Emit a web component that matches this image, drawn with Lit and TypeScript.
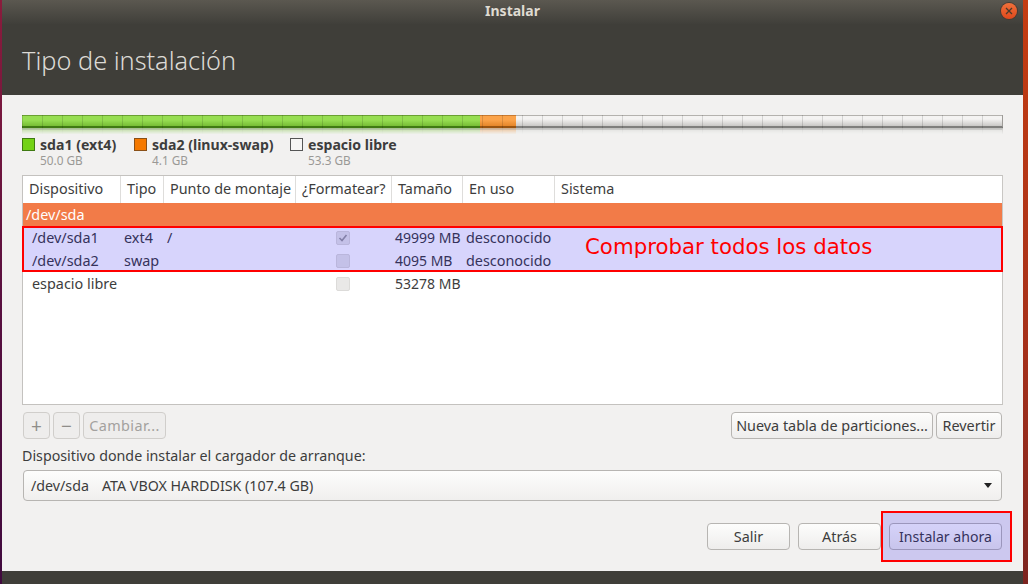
import { LitElement, css, html } from 'lit';
import { customElement } from 'lit/decorators.js';

const headers = ['Dispositivo', 'Tipo', 'Punto de montaje', '¿Formatear?', 'Tamaño', 'En uso', 'Sistema'];

const rows = [
   { dev: '/dev/sda1', type: 'ext4', mount: '/', checked: true, size: '49999 MB', used: 'desconocido' },
   { dev: '/dev/sda2', type: 'swap', mount: '', checked: false, size: '4095 MB', used: 'desconocido' },
   { dev: 'espacio libre', type: '', mount: '', checked: false, size: '53278 MB', used: '' }
];

const legend = [
   { name: 'sda1 (ext4)', size: '50.0 GB', cls: 'green' },
   { name: 'sda2 (linux-swap)', size: '4.1 GB', cls: 'orange' },
   { name: 'espacio libre', size: '53.3 GB', cls: 'free' }
];

@customElement( 'app-root' )
export class AppRoot extends LitElement {
   render() {
      return html`
      <div class="strip left"></div>
      <div class="window">
        <div class="titlebar">
          <span class="wintitle">Instalar</span>
          <span class="close">
            <svg width="8" height="8" viewBox="0 0 8 8"><path d="M1 1L7 7M7 1L1 7" stroke="#4a3a2a" stroke-width="1.3"/></svg>
          </span>
        </div>
        <div class="header"><h1>Tipo de instalación</h1></div>
        <div class="content">
          <div class="bar">
            <div class="seg green"></div>
            <div class="seg orange"></div>
            <div class="seg free"></div>
          </div>
          <div class="legend">
            ${ legend.map( l => html`
              <div class="legend-item ${ l.cls }">
                <span class="swatch"></span>
                <div>
                  <div class="lname">${ l.name }</div>
                  <div class="lsize">${ l.size }</div>
                </div>
              </div>
            ` ) }
          </div>
          <div class="table">
            <div class="thead">
              ${ headers.map( h => html`<div class="th">${ h }</div>` ) }
            </div>
            <div class="disk">/dev/sda</div>
            ${ rows.map( r => html`
              <div class="row">
                <div class="first">${ r.dev }</div>
                <div>${ r.type }</div>
                <div>${ r.mount }</div>
                <div class="checkcell">
                  <span class="check">
                    ${ r.checked ? html`<svg width="10" height="10" viewBox="0 0 10 10"><path d="M1.5 5L4 7.5L8.5 2" fill="none" stroke="#9a9a9a" stroke-width="1.6"/></svg>` : '' }
                  </span>
                </div>
                <div class="size">${ r.size }</div>
                <div>${ r.used }</div>
                <div></div>
              </div>
            ` ) }
            <div class="note">
              <span>Comprobar todos los datos</span>
            </div>
          </div>
          <div class="tools">
            <button class="btn off square">+</button>
            <button class="btn off square">−</button>
            <button class="btn off change">Cambiar...</button>
            <span class="spacer"></span>
            <button class="btn newtable">Nueva tabla de particiones...</button>
            <button class="btn revert">Revertir</button>
          </div>
          <div class="bootlabel">Dispositivo donde instalar el cargador de arranque:</div>
          <div class="combo">
            <span class="cdev">/dev/sda</span>
            <span class="cname">ATA VBOX HARDDISK (107.4 GB)</span>
            <span class="arrow"></span>
          </div>
          <div class="actions">
            <button class="btn action">Salir</button>
            <button class="btn action">Atrás</button>
            <div class="install-wrap">
              <button class="btn install">Instalar ahora</button>
              <span class="mark"></span>
            </div>
          </div>
        </div>
        <div class="footer"></div>
      </div>
      <div class="strip right"></div>
    `;
   }

   static styles = css`
  :host {
    display: flex;
    width: 1028px;
    height: 584px;
    overflow: hidden;
    font-family: "Noto Sans", "Open Sans", sans-serif;
    font-size: 14.4px;
    color: #3d3d3d;
  }
  .strip {
    flex: none;
  }
  .strip.left {
    width: 2px;
    background: linear-gradient(#8a1c3c, #5a1040 50%, #400a3e);
  }
  .strip.right {
    width: 5px;
    background: linear-gradient(#c43d12, #a5301a 60%, #7c2420);
  }
  .window {
    flex: 1;
    display: flex;
    flex-direction: column;
    min-width: 0;
  }
  .titlebar {
    height: 24px;
    flex: none;
    display: flex;
    align-items: center;
    justify-content: center;
    position: relative;
    background: linear-gradient(#5b5850, #403f3a);
  }
  .wintitle {
    color: #dfdbd2;
    font-weight: 700;
    font-size: 14px;
    position: relative;
    top: -2px;
  }
  .close {
    position: absolute;
    left: 999px;
    top: 3px;
    width: 16px;
    height: 16px;
    border-radius: 50%;
    background: linear-gradient(#f0703a, #e0481c);
    box-shadow: 0 0 0 1px #4a3a30;
    display: flex;
    align-items: center;
    justify-content: center;
  }
  .header {
    height: 71px;
    flex: none;
    background: #3f3e39;
    display: flex;
    padding-left: 20px;
    box-sizing: border-box;
  }
  h1 {
    margin: 0;
    padding-top: 19px;
    font-size: 25.3px;
    line-height: 34px;
    font-weight: 300;
    color: #dcdad5;
  }
  .content {
    flex: 1;
    background: #f2f1f0;
    padding: 20px 20px 0;
    display: flex;
    flex-direction: column;
    min-height: 0;
  }
  .bar {
    height: 13px;
    display: flex;
    width: 981px;
    flex: none;
    position: relative;
    -webkit-box-reflect: below 0 linear-gradient(transparent 50%, rgba(255, 255, 255, .45));
  }
  .bar::after {
    content: "";
    position: absolute;
    inset: 0;
    background: repeating-linear-gradient(90deg, rgba(0, 0, 0, .13) 0 1px, transparent 1px 20px);
  }
  .seg {
    box-sizing: border-box;
    border-top: 1px solid;
    border-bottom: 2px solid;
  }
  .seg.green {
    width: 458px;
    border-color: #6aa032 #3f7a12 #3f7a12;
    background: linear-gradient(#97de52 40%, #77bd35);
  }
  .seg.orange {
    width: 36px;
    border-color: #c97a30 #b35f10 #9a5410;
    background: linear-gradient(#fba34a 40%, #e5862a);
  }
  .seg.free {
    flex: 1;
    border-color: #b4b2ae #b4b2ae #7f7f7d;
    border-right: 1px solid #b4b2ae;
    background: linear-gradient(#f4f3f2 30%, #c9c8c6);
  }
  .legend {
    display: flex;
    margin-top: 9px;
    height: 38px;
    flex: none;
  }
  .legend-item {
    display: flex;
    gap: 5px;
  }
  .legend-item:nth-child(1) { width: 112px; }
  .legend-item:nth-child(2) { width: 156px; }
  .swatch {
    width: 11px;
    height: 11px;
    margin-top: 1px;
    border: 1px solid;
    flex: none;
  }
  .green .swatch { background: #73d216; border-color: #3f7a12; }
  .orange .swatch { background: #f57900; border-color: #8a5018; }
  .free .swatch { background: #f6f5f4; border-color: #555; }
  .lname {
    font-weight: 700;
    font-size: 14.1px;
    line-height: 15px;
    white-space: nowrap;
  }
  .lsize {
    font-size: 11.8px;
    line-height: 16px;
    color: #9a9996;
  }
  .table {
    position: relative;
    width: 981px;
    height: 230px;
    flex: none;
    box-sizing: border-box;
    border: 1px solid #c4c2bf;
    border-right-color: #c9c7c4;
    background: #fff;
  }
  .thead, .row {
    display: grid;
    grid-template-columns: 98px 43px 132px 96px 71px 92px 1fr;
  }
  .thead {
    height: 27px;
  }
  .th {
    padding-left: 6px;
    line-height: 26px;
    border-right: 1px solid #dedddb;
    white-space: nowrap;
  }
  .th:last-child {
    border-right: 0;
  }
  .disk {
    height: 23px;
    line-height: 23px;
    background: #f27b48;
    color: #fff;
    padding-left: 3px;
  }
  .row {
    height: 23px;
    line-height: 24px;
    white-space: nowrap;
  }
  .row > div {
    padding-left: 3px;
  }
  .row > .first {
    padding-left: 9px;
  }
  .row > .size {
    font-size: 14px;
  }
  .row > .checkcell {
    padding: 0;
    display: flex;
    align-items: center;
    justify-content: center;
    margin-left: -2px;
  }
  .check {
    width: 12px;
    height: 12px;
    border: 1px solid #dcdbd9;
    border-radius: 2px;
    background: #e9e8e7;
    display: flex;
    align-items: center;
    justify-content: center;
  }
  .note {
    position: absolute;
    left: -1px;
    top: 50px;
    width: 981px;
    height: 46px;
    box-sizing: border-box;
    border: 2px solid #f00;
    background: rgba(16, 0, 240, .17);
    color: #f00;
    font-family: "DejaVu Sans", sans-serif;
    font-size: 21.3px;
    line-height: 37px;
    padding-left: 561px;
  }
  .tools {
    display: flex;
    margin-top: 7px;
    height: 27px;
    flex: none;
    gap: 3px;
    width: 980px;
    padding-left: 1px;
    box-sizing: border-box;
  }
  .spacer {
    flex: 1;
  }
  .btn {
    font: inherit;
    color: #3d3d3d;
    height: 27px;
    padding: 0;
    border: 1px solid #b7b5b2;
    border-radius: 4px;
    background: linear-gradient(#fdfdfc, #eeedec);
    white-space: nowrap;
  }
  .btn.off {
    color: #a3a19e;
    border-color: #d0cecb;
    background: #eeedec;
  }
  .btn.square { width: 27px; font-size: 19px; line-height: 22px; color: #8f8d8a; }
  .btn.change { width: 83px; letter-spacing: .4px; }
  .btn.newtable { width: 202px; }
  .btn.revert { width: 66px; }
  .bootlabel {
    margin-top: 7px;
    height: 24px;
    line-height: 19px;
    font-size: 14.25px;
  }
  .combo {
    width: 979px;
    height: 31px;
    margin-left: 1px;
    flex: none;
    box-sizing: border-box;
    border: 1px solid #b7b5b2;
    border-radius: 4px;
    background: linear-gradient(#fdfdfc, #f0efee);
    display: flex;
    align-items: center;
    padding: 0 9px 0 7px;
    font-size: 14.25px;
  }
  .cdev {
    width: 71px;
    flex: none;
  }
  .cname {
    flex: 1;
  }
  .arrow {
    width: 0;
    height: 0;
    border: 4px solid transparent;
    border-top: 5px solid #222;
    border-bottom: 0;
  }
  .actions {
    display: flex;
    justify-content: flex-end;
    margin-top: 22px;
    gap: 8px;
    width: 980px;
    flex: none;
  }
  .btn.action { width: 83px; }
  .install-wrap {
    position: relative;
  }
  .btn.install { width: 113px; display: block; font-size: 14.1px; }
  .mark {
    position: absolute;
    left: -8px;
    top: -12px;
    width: 131px;
    height: 51px;
    box-sizing: border-box;
    border: 2px solid #f00;
    background: rgba(16, 0, 240, .17);
  }
  .footer {
    height: 13px;
    flex: none;
    background: #3f3e39;
  }
  `;
}

declare global {
   interface HTMLElementTagNameMap {
      'app-root': AppRoot;
   }
};
